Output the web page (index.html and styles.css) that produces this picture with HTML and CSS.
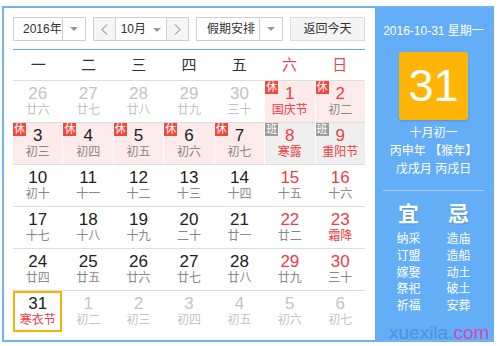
FILE: index.html
```html
<!DOCTYPE html>
<html lang="zh-CN">
<head>
  <meta charset="UTF-8" />
  <title>万年历</title>
  <link rel="stylesheet" href="styles.css">
</head>
<body>
  <div class="calendar">
    <div class="main">
      <div class="toolbar">
        <div class="select year">
          <span class="val">2016年</span>
          <span class="arrow"><i class="tri"></i></span>
        </div>
        <div class="month">
          <span class="nav"><svg width="7" height="11" viewBox="0 0 7 11"><polyline points="6,0.5 1,5.5 6,10.5" fill="none" stroke="#777" stroke-width="1"/></svg></span>
          <span class="mval">10月 <i class="tri"></i></span>
          <span class="nav"><svg width="7" height="11" viewBox="0 0 7 11"><polyline points="1,0.5 6,5.5 1,10.5" fill="none" stroke="#777" stroke-width="1"/></svg></span>
        </div>
        <div class="select holiday">
          <span class="val">假期安排</span>
          <span class="arrow"><i class="tri"></i></span>
        </div>
        <div class="today-btn">返回今天</div>
      </div>

      <div class="weekdays">
        <span>一</span><span>二</span><span>三</span><span>四</span><span>五</span><span class="red">六</span><span class="red">日</span>
      </div>

      <div class="week">
        <div class="day other"><b>26</b><em>廿六</em></div>
        <div class="day other"><b>27</b><em>廿七</em></div>
        <div class="day other"><b>28</b><em>廿八</em></div>
        <div class="day other"><b>29</b><em>廿九</em></div>
        <div class="day other"><b>30</b><em>三十</em></div>
        <div class="day rest wkend"><span class="tag">休</span><b>1</b><em class="fest">国庆节</em></div>
        <div class="day rest wkend"><span class="tag">休</span><b>2</b><em>初二</em></div>
      </div>
      <div class="week">
        <div class="day rest"><span class="tag">休</span><b>3</b><em>初三</em></div>
        <div class="day rest"><span class="tag">休</span><b>4</b><em>初四</em></div>
        <div class="day rest"><span class="tag">休</span><b>5</b><em>初五</em></div>
        <div class="day rest"><span class="tag">休</span><b>6</b><em>初六</em></div>
        <div class="day rest"><span class="tag">休</span><b>7</b><em>初七</em></div>
        <div class="day work wkend"><span class="tag">班</span><b>8</b><em class="fest">寒露</em></div>
        <div class="day work wkend"><span class="tag">班</span><b>9</b><em class="fest">重阳节</em></div>
      </div>
      <div class="week">
        <div class="day"><b>10</b><em>初十</em></div>
        <div class="day"><b>11</b><em>十一</em></div>
        <div class="day"><b>12</b><em>十二</em></div>
        <div class="day"><b>13</b><em>十三</em></div>
        <div class="day"><b>14</b><em>十四</em></div>
        <div class="day wkend"><b>15</b><em>十五</em></div>
        <div class="day wkend"><b>16</b><em>十六</em></div>
      </div>
      <div class="week">
        <div class="day"><b>17</b><em>十七</em></div>
        <div class="day"><b>18</b><em>十八</em></div>
        <div class="day"><b>19</b><em>十九</em></div>
        <div class="day"><b>20</b><em>二十</em></div>
        <div class="day"><b>21</b><em>廿一</em></div>
        <div class="day wkend"><b>22</b><em>廿二</em></div>
        <div class="day wkend"><b>23</b><em class="fest">霜降</em></div>
      </div>
      <div class="week">
        <div class="day"><b>24</b><em>廿四</em></div>
        <div class="day"><b>25</b><em>廿五</em></div>
        <div class="day"><b>26</b><em>廿六</em></div>
        <div class="day"><b>27</b><em>廿七</em></div>
        <div class="day"><b>28</b><em>廿八</em></div>
        <div class="day wkend"><b>29</b><em>廿九</em></div>
        <div class="day wkend"><b>30</b><em>三十</em></div>
      </div>
      <div class="week last">
        <div class="day selected"><b>31</b><em class="fest">寒衣节</em></div>
        <div class="day other"><b>1</b><em>初二</em></div>
        <div class="day other"><b>2</b><em>初三</em></div>
        <div class="day other"><b>3</b><em>初四</em></div>
        <div class="day other"><b>4</b><em>初五</em></div>
        <div class="day other"><b>5</b><em>初六</em></div>
        <div class="day other"><b>6</b><em>初七</em></div>
      </div>
    </div>

    <div class="side">
      <div class="date">2016-10-31 星期一</div>
      <div class="big">31</div>
      <div class="lunar">
        <p>十月初一</p>
        <p>丙申年 【猴年】</p>
        <p>戊戌月 丙戌日</p>
      </div>
      <div class="divider"></div>
      <div class="yiji">
        <div class="col">
          <h3>宜</h3>
          <p>纳采</p><p>订盟</p><p>嫁娶</p><p>祭祀</p><p>祈福</p>
        </div>
        <div class="col">
          <h3>忌</h3>
          <p>造庙</p><p>造船</p><p>动土</p><p>破土</p><p>安葬</p>
        </div>
      </div>
    </div>
  </div>
  <div class="watermark">xuexila.<span>com</span></div>
</body>
</html>
```

FILE: styles.css
```css
body {
  margin: 6px 0 0 2px;
  font-family: "Liberation Sans", "Noto Sans CJK SC", sans-serif;
  color: #333;
  background: #fff;
}
.calendar {
  display: flex;
  width: 492px;
  height: 336px;
  box-sizing: border-box;
  border: 2px solid #6fb2f5;
  border-right-color: #64adf7;
}
.main {
  width: 371px;
  box-sizing: border-box;
  padding: 9px 10px 0 9px;
  background: #fff;
}

/* toolbar */
.toolbar {
  display: flex;
  justify-content: space-between;
  height: 24px;
  padding-bottom: 8px;
  border-bottom: 1px solid #64acf5;
  font-size: 12px;
  white-space: nowrap;
}
.select, .month, .today-btn {
  display: flex;
  box-sizing: border-box;
  height: 24px;
  border: 1px solid #d0d0d0;
  line-height: 22px;
}
.select .val {
  flex: 1;
  min-width: 0;
  padding-left: 9px;
}
.select .arrow {
  width: 22px;
  border-left: 1px solid #d0d0d0;
  display: flex;
  align-items: center;
  justify-content: center;
}
.tri {
  display: inline-block;
  width: 0;
  height: 0;
  border-left: 4px solid transparent;
  border-right: 4px solid transparent;
  border-top: 4px solid #999;
  vertical-align: middle;
}
.year { width: 73px; }
.holiday { width: 87px; }
.holiday .val { padding-left: 10px; }
.month { width: 96px; }
.month .nav {
  width: 21px;
  background: #f5f5f5;
  display: flex;
  align-items: center;
  justify-content: center;
}
.month .nav:first-child { border-right: 1px solid #d0d0d0; }
.month .nav:last-child { border-left: 1px solid #d0d0d0; }
.month .mval {
  flex: 1;
  text-align: center;
}
.month .mval .tri { margin-left: 4px; }
.today-btn {
  width: 75px;
  justify-content: center;
  background: #f5f5f5;
  border-color: #dcdcdc;
}

/* grid */
.weekdays {
  display: grid;
  grid-template-columns: repeat(7, 1fr);
  height: 30px;
  line-height: 30px;
  border-bottom: 1px solid #ddd;
  text-align: center;
  font-size: 15px;
  color: #333;
}
.weekdays .red { color: #e8484d; }
.week {
  display: grid;
  grid-template-columns: repeat(7, 1fr);
  column-gap: 1px;
  height: 42px;
  box-sizing: border-box;
  border-bottom: 1px solid #ddd;
}
.week.last { border-bottom: none; }
.day {
  position: relative;
  text-align: center;
  padding-top: 4px;
  box-sizing: border-box;
}
.day b {
  display: block;
  font-weight: normal;
  font-size: 17px;
  line-height: 18px;
  color: #222;
}
.day em {
  display: block;
  font-style: normal;
  font-size: 12px;
  line-height: 14px;
  color: #888;
}
.day.wkend b { color: #f03c45; }
.day em.fest { color: #f03c45; }
.day.other b, .day.other em { color: #c4c4c4; }
.day.rest { background: #fdeaea; }
.day.work { background: #efefef; }
.tag {
  position: absolute;
  left: 0;
  top: 0;
  width: 13px;
  height: 13px;
  line-height: 13px;
  font-size: 11px;
  color: #fff;
  background: #f2483d;
}
.day.work .tag { background: #9b9b9b; }
.day.selected {
  border: 2px solid #f8b200;
  padding-top: 2px;
  height: 41px;
}

/* side panel */
.side {
  flex: 1;
  background: #64adf7;
  color: #fff;
  text-align: center;
}
.date {
  margin-top: 15px;
  font-size: 12px;
  line-height: 16px;
}
.big {
  width: 69px;
  height: 68px;
  margin: 13px auto 0;
  background: #ffb508;
  border-radius: 3px;
  box-shadow: 0 1px 2px rgba(0, 0, 0, 0.15);
  font-size: 45px;
  line-height: 68px;
}
.lunar { margin-top: 4px; }
.lunar p {
  margin: 0;
  font-size: 12px;
  line-height: 18px;
}
.divider {
  width: 101px;
  height: 1px;
  margin: 12px auto 0;
  background: #a8d0fa;
}
.yiji {
  display: grid;
  grid-template-columns: 50px 50px;
  justify-content: center;
  margin-top: 11px;
}
.yiji h3 {
  margin: 0 0 5px;
  font-size: 21px;
  line-height: 24px;
  font-weight: bold;
  text-shadow: 1px 1px 1px rgba(0, 0, 0, 0.15);
}
.yiji p {
  margin: 0;
  font-size: 12px;
  line-height: 16.75px;
}

.watermark {
  position: absolute;
  left: 389px;
  top: 322px;
  font-family: "Liberation Sans", sans-serif;
  font-size: 19px;
  line-height: 22px;
  color: #4e94d6;
}
.watermark span { color: #d44ab2; }
```
